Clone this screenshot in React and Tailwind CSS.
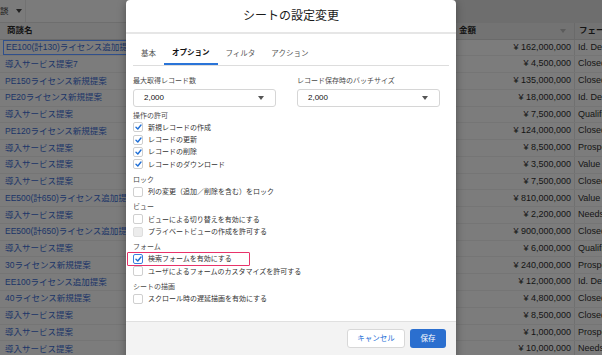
import React from "react";

const names = [
  "EE100(計130)ライセンス追加提案",
  "導入サービス提案7",
  "PE150ライセンス新規提案",
  "PE20ライセンス新規提案",
  "導入サービス提案",
  "PE120ライセンス新規提案",
  "導入サービス提案",
  "導入サービス提案",
  "導入サービス提案",
  "EE500(計650)ライセンス追加提案",
  "導入サービス提案",
  "EE500(計650)ライセンス追加提案",
  "導入サービス提案",
  "30ライセンス新規提案",
  "EE100ライセンス追加提案",
  "40ライセンス新規提案",
  "導入サービス提案",
  "導入サービス提案",
  "導入サービス提案",
];

const amounts = [
  "¥ 162,000,000",
  "¥ 4,500,000",
  "¥ 135,000,000",
  "¥ 18,000,000",
  "¥ 7,500,000",
  "¥ 124,000,000",
  "¥ 8,500,000",
  "¥ 3,500,000",
  "¥ 7,500,000",
  "¥ 810,000,000",
  "¥ 2,200,000",
  "¥ 900,000,000",
  "¥ 6,000,000",
  "¥ 240,000,000",
  "¥ 12,000,000",
  "¥ 4,800,000",
  "¥ 8,500,000",
  "¥ 1,000,000",
  "¥ 10,000,000",
];

const phases = [
  "Id. Decision Makers",
  "Closed Won",
  "Closed Won",
  "Id. Decision Makers",
  "Qualification",
  "Closed Won",
  "Prospecting",
  "Value Proposition",
  "Closed Won",
  "Value Proposition",
  "Needs Analysis",
  "Closed Won",
  "Qualification",
  "Prospecting",
  "Id. Decision Makers",
  "Closed Won",
  "Closed Won",
  "Prospecting",
  "Needs Analysis",
];

function Caret({ color = "#555" }) {
  return (
    <svg width="6" height="4" viewBox="0 0 6 4">
      <path d="M0 0 L6 0 L3 4 Z" fill={color} />
    </svg>
  );
}

function Check() {
  return (
    <svg width="7" height="6" viewBox="0 0 7 6">
      <path d="M1 3.3 L2.8 5 L6 1" fill="none" stroke="#1f6fd6" strokeWidth="1.4" strokeLinecap="round" strokeLinejoin="round" />
    </svg>
  );
}

function CheckRow({ label, checked, disabled, focus }) {
  let box = "w-[10px] h-[10px] rounded-[2px] flex items-center justify-center border ";
  if (disabled) box += "bg-[#ececec] border-[#dedede]";
  else if (focus) box += "bg-white border-[#3b7fe0]";
  else box += "bg-white border-[#cfcfcf]";
  return (
    <div className="flex items-center h-[12.4px] gap-[5px]">
      <div className={box}>{checked ? <Check /> : null}</div>
      <span className="text-[7px] text-[#333] leading-none">{label}</span>
    </div>
  );
}

function SectionLabel({ children, first }) {
  return (
    <div className={"h-[12px] flex items-center text-[7px] text-[#4a4a4a] leading-none " + (first ? "" : "mt-[3px]")}>
      {children}
    </div>
  );
}

function Select({ value }) {
  return (
    <div className="h-[18px] w-[143px] border border-[#d6d6d6] rounded-[3px] flex items-center justify-between pl-[10px] pr-[11px] bg-white">
      <span className="text-[8px] text-[#111] leading-none">{value}</span>
      <Caret />
    </div>
  );
}

export default function App() {
  return (
    <div className="relative w-[602px] h-[355px] overflow-hidden bg-[#7c7c7c] font-['Liberation_Sans','Noto_Sans_CJK_JP',sans-serif]">
      {/* top bar */}
      <div className="flex h-[23px] border-b border-[#6e6e6e]">
        <div className="w-[455px] flex items-center bg-[#7b7b7b]">
          <div className="w-[26px] h-full flex items-center border-r border-[#727272]">
            <span className="text-[8.5px] text-[#151515] whitespace-nowrap">談</span>
            <span className="ml-[7px]"><Caret color="#222" /></span>
          </div>
        </div>
        <div className="flex-1 bg-[#6e6e6e]" />
      </div>
      {/* header row */}
      <div className="flex h-[16.5px] items-center border-b border-[#6a6a6a] bg-[#787878]">
        <div className="w-[160px] pl-[7px] text-[8.5px] font-bold text-[#141414] whitespace-nowrap">商談名</div>
        <div className="w-[295px]" />
        <div className="w-[120px] h-full flex items-center justify-between pl-[4px] pr-[8px] border-r border-[#6a6a6a] bg-[#737373]">
          <span className="text-[8.5px] font-bold text-[#141414]">金額</span>
          <Caret color="#5c5c5c" />
        </div>
        <div className="flex-1 h-full flex items-center pl-[4px] bg-[#737373] text-[8.5px] font-bold text-[#141414] whitespace-nowrap overflow-hidden">フェーズ</div>
      </div>
      {/* rows */}
      {names.map((n, i) => (
        <div key={i} className="flex h-[16.78px] items-center border-b border-[#757575]">
          {i === 0 ? (
            <div className="w-[160px] h-full pl-[3px]">
              <div className="h-full flex items-center pl-[2px] border border-[#2f4f8c] text-[8.5px] text-[#1a3468] whitespace-nowrap overflow-hidden">{n}</div>
            </div>
          ) : (
            <div className="w-[160px] pl-[5px] text-[8.5px] text-[#1a3468] whitespace-nowrap overflow-hidden">{n}</div>
          )}
          <div className="w-[295px]" />
          <div className="w-[120px] h-full flex items-center justify-end pr-[3px] border-r border-[#707070] text-[9px] text-[#141414] whitespace-nowrap">{amounts[i]}</div>
          <div className="flex-1 pl-[3px] text-[9px] text-[#141414] whitespace-nowrap overflow-hidden">{phases[i]}</div>
        </div>
      ))}

      {/* modal */}
      <div className="absolute left-[126px] top-0 w-[330px] h-[362px] bg-white rounded-[4px] shadow-[0_2px_8px_rgba(0,0,0,0.35)] flex flex-col overflow-hidden">
        <div className="h-[34px] flex items-center justify-center border-b-2 border-[#e6e6e6]">
          <span className="text-[12px] text-[#1a1a1a] leading-none">シートの設定変更</span>
        </div>
        <div className="flex-1 px-[7px]">
          <div className="mt-[9px] flex border-b border-[#dddddd]">
            <div className="h-[22px] px-[8px] flex items-center text-[7.5px] text-[#555]">基本</div>
            <div className="h-[22px] px-[8px] flex items-center text-[7.5px] font-bold text-[#111] border-b-2 border-[#2a74d8] -mb-px">オプション</div>
            <div className="h-[22px] px-[8px] flex items-center text-[7.5px] text-[#555]">フィルタ</div>
            <div className="h-[22px] px-[8px] flex items-center text-[7.5px] text-[#555]">アクション</div>
          </div>
          <div className="mt-[10px] flex gap-[21px]">
            <div className="flex flex-col gap-[3.5px]">
              <div className="h-[9px] flex items-center text-[7px] text-[#4a4a4a] leading-none">最大取得レコード数</div>
              <Select value="2,000" />
            </div>
            <div className="flex flex-col gap-[3.5px]">
              <div className="h-[9px] flex items-center text-[7px] text-[#4a4a4a] leading-none">レコード保存時のバッチサイズ</div>
              <Select value="2,000" />
            </div>
          </div>
          <div className="mt-[2.5px]">
            <SectionLabel first>操作の許可</SectionLabel>
            <CheckRow label="新規レコードの作成" checked />
            <CheckRow label="レコードの更新" checked />
            <CheckRow label="レコードの削除" checked />
            <CheckRow label="レコードのダウンロード" checked />
            <SectionLabel>ロック</SectionLabel>
            <CheckRow label="列の変更（追加／削除を含む）をロック" />
            <SectionLabel>ビュー</SectionLabel>
            <CheckRow label="ビューによる切り替えを有効にする" />
            <CheckRow label="プライベートビューの作成を許可する" disabled />
            <SectionLabel>フォーム</SectionLabel>
            <div className="relative">
              <CheckRow label="検索フォームを有効にする" checked focus />
              <div className="absolute left-[-6px] top-[-0.5px] w-[123px] h-[14px] border-[1.5px] border-[#e8336a] rounded-[1px] pointer-events-none" />
            </div>
            <CheckRow label="ユーザによるフォームのカスタマイズを許可する" />
            <SectionLabel>シートの描画</SectionLabel>
            <CheckRow label="スクロール時の遅延描画を有効にする" />
          </div>
        </div>
        <div className="h-[41px] bg-[#f3f3f3] border-t border-[#e0e0e0] flex justify-end items-start pt-[7px] pr-[10px] gap-[5px]">
          <div className="h-[19px] w-[58px] bg-white border border-[#d8d8d8] rounded-[3px] flex items-center justify-center text-[7.5px] text-[#1f6fd6]">キャンセル</div>
          <div className="h-[19px] w-[36px] bg-[#2b6fcf] rounded-[3px] flex items-center justify-center text-[7.5px] text-white">保存</div>
        </div>
      </div>
    </div>
  );
}
